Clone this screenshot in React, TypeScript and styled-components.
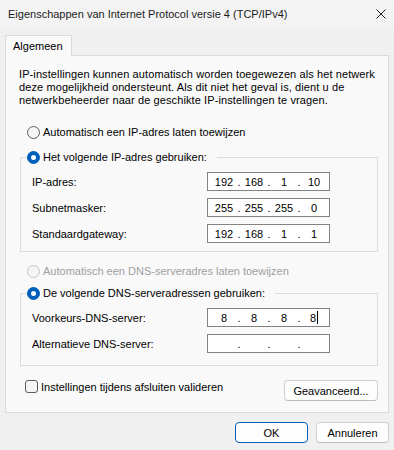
import React from "react";
import styled, { createGlobalStyle } from "styled-components";

const GlobalStyle = createGlobalStyle`
  html, body {
    margin: 0;
    padding: 0;
    background: #f0f0f0;
  }
  body {
    font-family: "Liberation Sans", Arial, sans-serif;
    font-size: 11px;
    color: #000;
  }
  * {
    box-sizing: border-box;
  }
`;

const Window = styled.div`
  width: 394px;
  height: 450px;
  background: #f0f0f0;
  display: flex;
  flex-direction: column;
  overflow: hidden;
`;

const TitleBar = styled.div`
  height: 28px;
  flex: none;
  background: #f3f3f3;
  display: flex;
  align-items: center;
  justify-content: space-between;
  padding: 0 8px;
  color: #1b1b1b;
`;

const Body = styled.div`
  padding: 7px 5px 0 5px;
`;

const TabStrip = styled.div`
  display: flex;
`;

const Tab = styled.div`
  position: relative;
  z-index: 1;
  height: 21px;
  margin-bottom: -1px;
  padding: 4px 8px 0 7px;
  background: #f9f9f9;
  border: 1px solid #dadada;
  border-bottom: none;
`;

const Panel = styled.div`
  height: 358px;
  background: #f9f9f9;
  border: 1px solid #dadada;
  padding: 12px 10px 0 13px;
  display: flex;
  flex-direction: column;
`;

const Intro = styled.p`
  margin: 0;
  line-height: 13px;
  white-space: nowrap;
  letter-spacing: 0.1px;
`;

const RadioRow = styled.label<{ $disabled?: boolean }>`
  display: flex;
  align-items: center;
  gap: 3px;
  height: 16px;
  color: ${(p) => (p.$disabled ? "#a0a0a0" : "#000")};
`;

const Radio = styled.span<{ $checked?: boolean; $disabled?: boolean }>`
  width: 13px;
  height: 13px;
  border-radius: 50%;
  flex: none;
  display: flex;
  align-items: center;
  justify-content: center;
  background: ${(p) => (p.$checked ? "#005fb8" : "#f5f5f5")};
  border: 1px solid
    ${(p) => (p.$checked ? "#005fb8" : p.$disabled ? "#c4c4c4" : "#5d5d5d")};

  &::after {
    content: "";
    display: ${(p) => (p.$checked ? "block" : "none")};
    width: 5px;
    height: 5px;
    border-radius: 50%;
    background: #fff;
  }
`;

const StandaloneRadio = styled.div<{ $top: number }>`
  margin-top: ${(p) => p.$top}px;
  padding-left: 8px;
`;

const Group = styled.fieldset<{ $top: number; $bottom: number }>`
  margin: ${(p) => p.$top}px 0 0 1px;
  padding: 7px 0 ${(p) => p.$bottom}px 0;
  border: 1px solid #dcdcdc;
  min-width: 0;
`;

const Legend = styled.legend`
  margin-left: 6px;
  padding: 0 10px 0 0;
`;

const Fields = styled.div`
  display: grid;
  grid-template-columns: 175px 123px;
  grid-auto-rows: 19px;
  row-gap: 7px;
  align-items: center;
  padding-left: 11px;
`;

const IpBox = styled.div`
  height: 19px;
  background: #fff;
  border: 1px solid #838383;
  display: flex;
  align-items: center;
  padding-left: 3px;
`;

const Segment = styled.span`
  width: 26px;
  display: flex;
  justify-content: center;
  align-items: center;
`;

const Dot = styled.span`
  width: 4px;
  text-align: center;
`;

const Caret = styled.span`
  width: 1px;
  height: 13px;
  background: #000;
  margin-left: 1px;
`;

const BottomRow = styled.div`
  margin-top: 14px;
  display: flex;
  justify-content: space-between;
  align-items: flex-start;
`;

const CheckRow = styled.label`
  display: flex;
  align-items: center;
  gap: 3px;
  height: 13px;
  padding-left: 6px;
`;

const Checkbox = styled.span`
  width: 13px;
  height: 13px;
  border-radius: 3px;
  border: 1px solid #5d5d5d;
  background: #f5f5f5;
`;

const Button = styled.button<{ $primary?: boolean; $width: number }>`
  width: ${(p) => p.$width}px;
  height: 21px;
  padding: 0;
  font-family: inherit;
  font-size: 11px;
  color: #000;
  background: #fdfdfd;
  border: 1px solid ${(p) => (p.$primary ? "#005fb8" : "#d0d0d0")};
  border-bottom-color: ${(p) => (p.$primary ? "#005fb8" : "#bcbcbc")};
  border-radius: 4px;
`;

const Footer = styled.div`
  margin-top: 9px;
  display: flex;
  justify-content: flex-end;
  gap: 8px;
`;

const IpField = ({ parts, caret }: { parts: string[]; caret?: boolean }) => (
  <IpBox>
    {parts.map((p, i) => (
      <React.Fragment key={i}>
        {i > 0 && <Dot>.</Dot>}
        <Segment>
          {p}
          {caret && i === parts.length - 1 && <Caret />}
        </Segment>
      </React.Fragment>
    ))}
  </IpBox>
);

const CloseIcon = () => (
  <svg width="10" height="10" viewBox="0 0 10 10">
    <path d="M0.5 0.5 L9.5 9.5 M9.5 0.5 L0.5 9.5" stroke="#1b1b1b" strokeWidth="1" />
  </svg>
);

export default function App() {
  return (
    <>
      <GlobalStyle />
      <Window>
        <TitleBar>
          <span>Eigenschappen van Internet Protocol versie 4 (TCP/IPv4)</span>
          <CloseIcon />
        </TitleBar>
        <Body>
          <TabStrip>
            <Tab>Algemeen</Tab>
          </TabStrip>
          <Panel>
            <Intro>
              IP-instellingen kunnen automatisch worden toegewezen als het netwerk
              <br />
              deze mogelijkheid ondersteunt. Als dit niet het geval is, dient u de
              <br />
              netwerkbeheerder naar de geschikte IP-instellingen te vragen.
            </Intro>

            <StandaloneRadio $top={17}>
              <RadioRow>
                <Radio />
                Automatisch een IP-adres laten toewijzen
              </RadioRow>
            </StandaloneRadio>

            <Group $top={9} $bottom={8}>
              <Legend>
                <RadioRow>
                  <Radio $checked />
                  Het volgende IP-adres gebruiken:
                </RadioRow>
              </Legend>
              <Fields>
                <span>IP-adres:</span>
                <IpField parts={["192", "168", "1", "10"]} />
                <span>Subnetmasker:</span>
                <IpField parts={["255", "255", "255", "0"]} />
                <span>Standaardgateway:</span>
                <IpField parts={["192", "168", "1", "1"]} />
              </Fields>
            </Group>

            <StandaloneRadio $top={11}>
              <RadioRow $disabled>
                <Radio $disabled />
                Automatisch een DNS-serveradres laten toewijzen
              </RadioRow>
            </StandaloneRadio>

            <Group $top={6} $bottom={12}>
              <Legend>
                <RadioRow>
                  <Radio $checked />
                  De volgende DNS-serveradressen gebruiken:
                </RadioRow>
              </Legend>
              <Fields>
                <span>Voorkeurs-DNS-server:</span>
                <IpField parts={["8", "8", "8", "8"]} caret />
                <span>Alternatieve DNS-server:</span>
                <IpField parts={["", "", "", ""]} />
              </Fields>
            </Group>

            <BottomRow>
              <CheckRow>
                <Checkbox />
                Instellingen tijdens afsluiten valideren
              </CheckRow>
              <Button $width={94}>Geavanceerd...</Button>
            </BottomRow>
          </Panel>
          <Footer>
            <Button $primary $width={73}>OK</Button>
            <Button $width={73}>Annuleren</Button>
          </Footer>
        </Body>
      </Window>
    </>
  );
}
